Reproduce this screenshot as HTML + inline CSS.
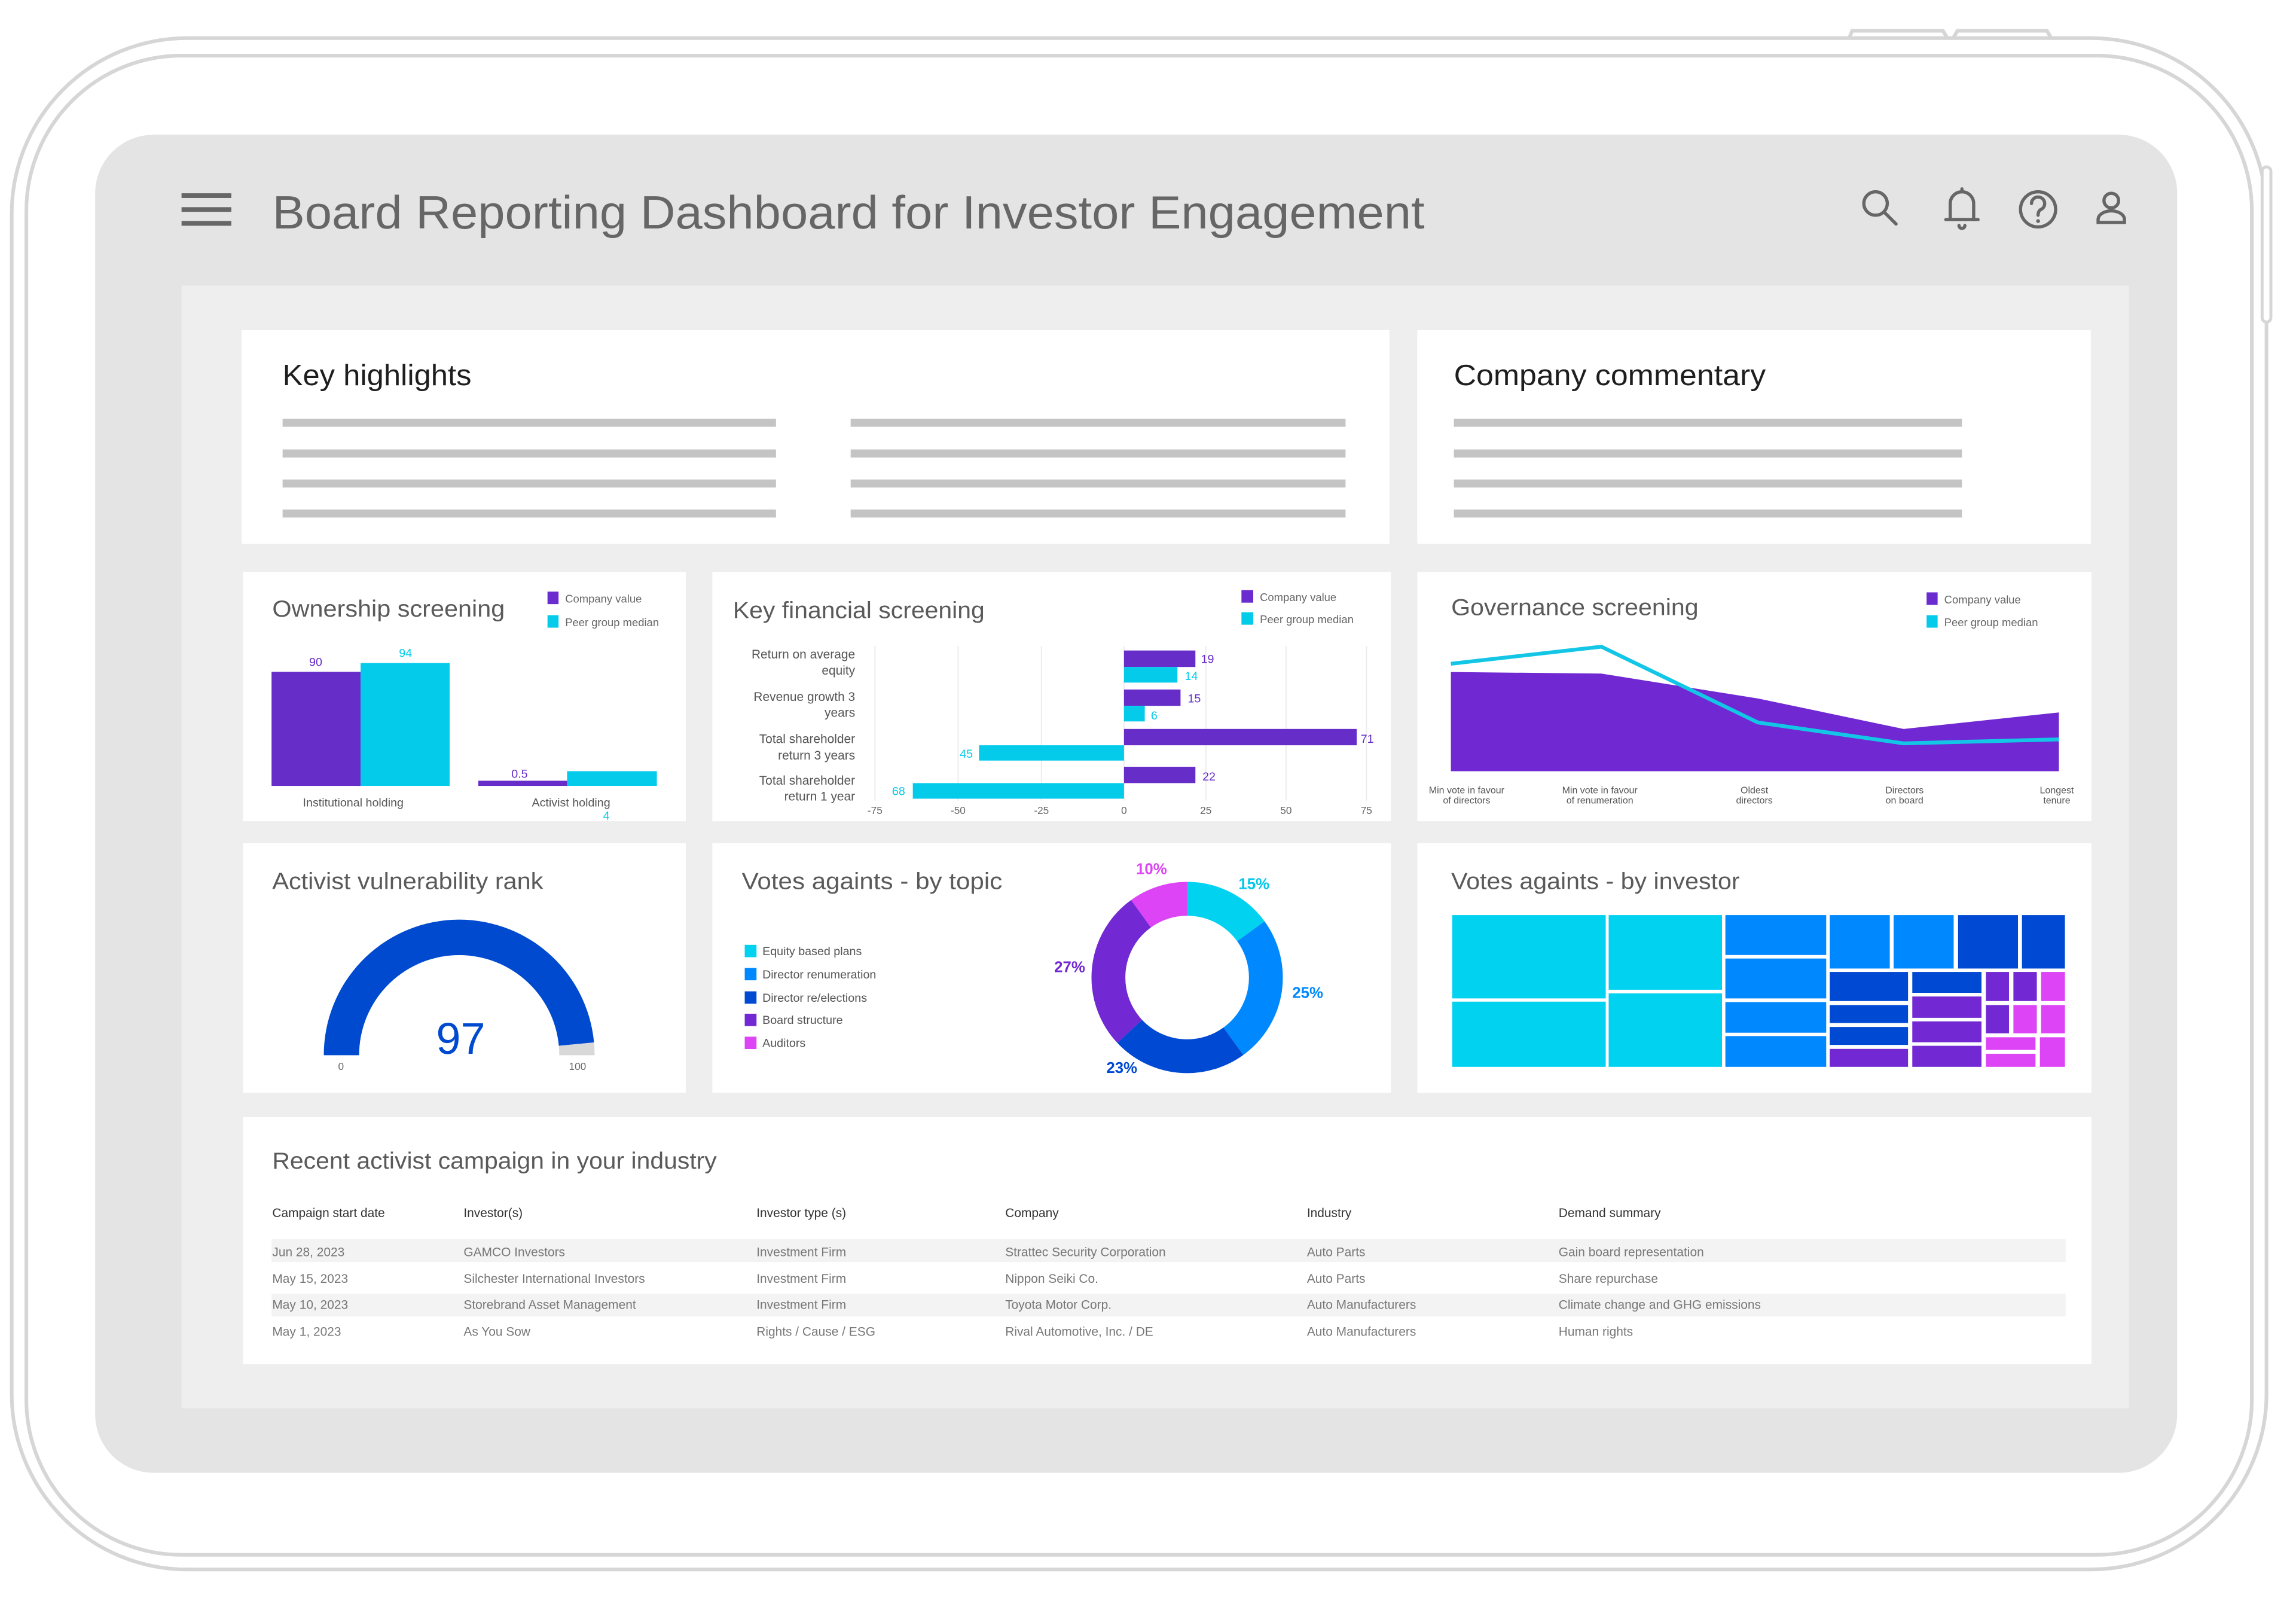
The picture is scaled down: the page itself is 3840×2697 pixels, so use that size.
<!DOCTYPE html>
<html><head><meta charset="utf-8"><style>
html,body{margin:0;padding:0;background:#fff;}
svg{display:block;}
text{font-family:"Liberation Sans",sans-serif;}
</style></head><body>
<svg width="3840" height="2697" viewBox="0 0 1560 1096" preserveAspectRatio="none" xmlns="http://www.w3.org/2000/svg">
<rect width="1560" height="1096" fill="#fff"/>
<g transform="scale(0.9948)">
<!-- device frame -->
<rect x="8" y="26" width="1540" height="1046" rx="120" fill="none" stroke="#d6d6d6" stroke-width="2.5"/>
<rect x="18" y="38" width="1520" height="1024" rx="106" fill="none" stroke="#d6d6d6" stroke-width="2.5"/>
<path d="M1263 26 L1265 21 L1327 21 L1330 26 M1334 26 L1337 21 L1398 21 L1401 26" fill="none" stroke="#d6d6d6" stroke-width="2.5"/>
<rect x="1545" y="114" width="6" height="106" rx="3" fill="#fff" stroke="#d6d6d6" stroke-width="2"/>
<!-- screen -->
<rect x="65" y="92" width="1422" height="914" rx="40" fill="#e4e4e4"/>
<rect x="124" y="195" width="1330" height="767" fill="#eeeeee"/>
<!-- header -->
<g fill="#666">
<rect x="124" y="132" width="34" height="3.2"/><rect x="124" y="141.5" width="34" height="3.2"/><rect x="124" y="151" width="34" height="3.2"/>
</g>
<text x="186" y="156" font-size="32" fill="#666" textLength="787" lengthAdjust="spacingAndGlyphs">Board Reporting Dashboard for Investor Engagement</text>
<g fill="none" stroke="#666" stroke-width="2.2" stroke-linecap="round">
<circle cx="1281" cy="139" r="8"/><line x1="1287" y1="145" x2="1295" y2="153"/>
<path d="M1332 150 L1332 139 A8 8 0 0 1 1348 139 L1348 150 Z M1329 150 L1351 150"/><path d="M1338 154 A2 2 0 0 0 1342 154"/><line x1="1340" y1="129" x2="1340" y2="131"/>
<circle cx="1392" cy="143" r="12"/>
<path d="M1387.5 139 A4.5 4.5 0 1 1 1393.5 143.3 Q1392 144.5 1392 147"/>
<circle cx="1442" cy="137" r="5"/><path d="M1433 152 L1433 150 A9 6 0 0 1 1451 150 L1451 152 Z"/>
</g>
<circle cx="1392" cy="151" r="1.3" fill="#666"/>
<!-- row1 cards -->
<rect x="165" y="225.5" width="784" height="146" fill="#fff"/>
<rect x="968" y="225.5" width="460" height="146" fill="#fff"/>
<text x="193" y="263" font-size="20" fill="#1e1e1e" textLength="129" lengthAdjust="spacingAndGlyphs">Key highlights</text>
<text x="993" y="263" font-size="20" fill="#1e1e1e" textLength="213" lengthAdjust="spacingAndGlyphs">Company commentary</text>
<g fill="#c4c4c4">
<rect x="193" y="286" width="337" height="5.5"/><rect x="193" y="307" width="337" height="5.5"/><rect x="193" y="327.5" width="337" height="5.5"/><rect x="193" y="348" width="337" height="5.5"/>
<rect x="581" y="286" width="338" height="5.5"/><rect x="581" y="307" width="338" height="5.5"/><rect x="581" y="327.5" width="338" height="5.5"/><rect x="581" y="348" width="338" height="5.5"/>
<rect x="993" y="286" width="347" height="5.5"/><rect x="993" y="307" width="347" height="5.5"/><rect x="993" y="327.5" width="347" height="5.5"/><rect x="993" y="348" width="347" height="5.5"/>
</g>
</g>

<!-- cards -->
<g fill="#fff">
<rect x="165" y="388.5" width="301" height="169.5"/>
<rect x="484" y="388.5" width="461" height="169.5"/>
<rect x="963" y="388.5" width="458" height="169.5"/>
<rect x="165" y="573" width="301" height="169.5"/>
<rect x="484" y="573" width="461" height="169.5"/>
<rect x="963" y="573" width="458" height="169.5"/>
<rect x="165" y="759" width="1256" height="168"/>
</g>

<!-- ownership -->
<text x="185" y="419" font-size="16" fill="#5a5a5a" textLength="158" lengthAdjust="spacingAndGlyphs">Ownership screening</text>
<rect x="372" y="402" width="7.5" height="8.5" fill="#6a2bcf"/><rect x="372" y="418" width="7.5" height="8.5" fill="#05cbeb"/>
<text x="384" y="409.5" font-size="7.5" fill="#666">Company value</text><text x="384" y="425.5" font-size="7.5" fill="#666">Peer group median</text>
<rect x="184.5" y="456.5" width="60.5" height="77.5" fill="#662dc9"/>
<rect x="245" y="450.5" width="60.5" height="83.5" fill="#05cbeb"/>
<rect x="325" y="530.5" width="60.3" height="3.5" fill="#662dc9"/>
<rect x="385.3" y="524" width="61" height="10" fill="#05cbeb"/>
<g font-size="8" text-anchor="middle">
<text x="214.5" y="452.5" fill="#662dc9">90</text><text x="275.5" y="446.5" fill="#05cbeb">94</text>
<text x="353" y="528.5" fill="#662dc9">0.5</text><text x="412" y="557" fill="#05cbeb">4</text>
<text x="240" y="548" fill="#555">Institutional holding</text><text x="388" y="548" fill="#555">Activist holding</text>
</g>

<!-- key financial -->
<text x="498" y="420" font-size="16" fill="#5a5a5a" textLength="171" lengthAdjust="spacingAndGlyphs">Key financial screening</text>
<rect x="843.5" y="401" width="8" height="8.5" fill="#6a2bcf"/><rect x="843.5" y="416" width="8" height="8.5" fill="#05cbeb"/>
<text x="856" y="408.5" font-size="7.5" fill="#666">Company value</text><text x="856" y="423.5" font-size="7.5" fill="#666">Peer group median</text>
<g stroke="#ececec" stroke-width="0.8">
<line x1="594.5" y1="439" x2="594.5" y2="544"/><line x1="651" y1="439" x2="651" y2="544"/><line x1="707.6" y1="439" x2="707.6" y2="544"/><line x1="763.7" y1="439" x2="763.7" y2="544"/><line x1="819.3" y1="439" x2="819.3" y2="544"/><line x1="873.8" y1="439" x2="873.8" y2="544"/><line x1="928.4" y1="439" x2="928.4" y2="544"/>
</g>
<g fill="#662dc9">
<rect x="763.7" y="442" width="48.5" height="11.2"/><rect x="763.7" y="468.5" width="38.4" height="11.1"/><rect x="763.7" y="495.3" width="158.1" height="11.1"/><rect x="763.7" y="521" width="48.5" height="11.1"/>
</g>
<g fill="#05cbeb">
<rect x="763.7" y="453.2" width="36.3" height="10.6"/><rect x="763.7" y="479.6" width="14.1" height="10.6"/><rect x="665.2" y="506.4" width="98.5" height="10.4"/><rect x="620.2" y="532.1" width="143.5" height="10.6"/>
</g>
<g font-size="8">
<text x="816" y="450.5" fill="#662dc9">19</text><text x="805" y="462" fill="#05cbeb">14</text>
<text x="807" y="477.2" fill="#662dc9">15</text><text x="782" y="488.8" fill="#05cbeb">6</text>
<text x="924.5" y="504.7" fill="#662dc9">71</text><text x="661" y="514.8" fill="#05cbeb" text-anchor="end">45</text>
<text x="817" y="530.4" fill="#662dc9">22</text><text x="615" y="540.3" fill="#05cbeb" text-anchor="end">68</text>
</g>
<g font-size="8.5" fill="#555" text-anchor="end">
<text x="581" y="447.5">Return on average</text><text x="581" y="458.3">equity</text>
<text x="581" y="476.3">Revenue growth 3</text><text x="581" y="487">years</text>
<text x="581" y="505">Total shareholder</text><text x="581" y="516">return 3 years</text>
<text x="581" y="533.2">Total shareholder</text><text x="581" y="544">return 1 year</text>
</g>
<g font-size="7" fill="#666" text-anchor="middle">
<text x="594.5" y="553">-75</text><text x="651" y="553">-50</text><text x="707.6" y="553">-25</text><text x="763.7" y="553">0</text><text x="819.3" y="553">25</text><text x="873.8" y="553">50</text><text x="928.4" y="553">75</text>
</g>

<!-- governance -->
<text x="986" y="418" font-size="16" fill="#5a5a5a" textLength="168" lengthAdjust="spacingAndGlyphs">Governance screening</text>
<rect x="1309" y="402.5" width="7.5" height="8.5" fill="#6a2bcf"/><rect x="1309" y="418" width="7.5" height="8.5" fill="#05cbeb"/>
<text x="1321" y="410" font-size="7.5" fill="#666">Company value</text><text x="1321" y="425.5" font-size="7.5" fill="#666">Peer group median</text>
<polygon points="985.8,524 985.8,456.6 1088,457.7 1194.4,474.6 1293.4,495.3 1398.9,484.1 1398.9,524" fill="#7028d2"/>
<polyline points="985.8,451 1088,439.4 1194.4,490.9 1293.4,505.1 1398.9,502.4" fill="none" stroke="#14c6e6" stroke-width="2.6" stroke-linejoin="round"/>
<g font-size="6.5" fill="#555" text-anchor="middle">
<text x="996.5" y="539">Min vote in favour</text><text x="996.5" y="546">of directors</text>
<text x="1087" y="539">Min vote in favour</text><text x="1087" y="546">of renumeration</text>
<text x="1192" y="539">Oldest</text><text x="1192" y="546">directors</text>
<text x="1294" y="539">Directors</text><text x="1294" y="546">on board</text>
<text x="1397.5" y="539">Longest</text><text x="1397.5" y="546">tenure</text>
</g>

<!-- gauge -->
<text x="185" y="604" font-size="16" fill="#5a5a5a" textLength="184" lengthAdjust="spacingAndGlyphs">Activist vulnerability rank</text>
<path d="M220 717 A92 92 0 0 1 403.6 708.3 L379.7 710.6 A68 68 0 0 0 244 717 Z" fill="#004ad0"/>
<path d="M403.6 708.3 A92 92 0 0 1 404 717 L380 717 A68 68 0 0 0 379.7 710.6 Z" fill="#d8d8d8"/>
<text x="313" y="716" font-size="30" fill="#004ad0" text-anchor="middle">97</text>
<text x="231.7" y="727" font-size="7" fill="#666" text-anchor="middle">0</text>
<text x="392.4" y="727" font-size="7" fill="#666" text-anchor="middle">100</text>

<!-- donut -->
<text x="504" y="604" font-size="16" fill="#5a5a5a" textLength="177" lengthAdjust="spacingAndGlyphs">Votes againts - by topic</text>
<g>
<rect x="506" y="642" width="8" height="8.4" fill="#00d2f0"/><rect x="506" y="657.7" width="8" height="8.4" fill="#0088ff"/><rect x="506" y="673.6" width="8" height="8.4" fill="#004ad3"/><rect x="506" y="688.8" width="8" height="8.4" fill="#7228d2"/><rect x="506" y="704.4" width="8" height="8.4" fill="#dd44f6"/>
</g>
<g font-size="8" fill="#555">
<text x="518" y="649">Equity based plans</text><text x="518" y="664.8">Director renumeration</text><text x="518" y="680.6">Director re/elections</text><text x="518" y="695.8">Board structure</text><text x="518" y="711.4">Auditors</text>
</g>
<g transform="rotate(-90 806.6 664.2)" fill="none" stroke-width="23">
<circle cx="806.6" cy="664.2" r="53.5" stroke="#00d2f0" stroke-dasharray="50.42 336.15" stroke-dashoffset="0"/>
<circle cx="806.6" cy="664.2" r="53.5" stroke="#0088ff" stroke-dasharray="84.04 336.15" stroke-dashoffset="-50.42"/>
<circle cx="806.6" cy="664.2" r="53.5" stroke="#004ad3" stroke-dasharray="77.31 336.15" stroke-dashoffset="-134.46"/>
<circle cx="806.6" cy="664.2" r="53.5" stroke="#7228d2" stroke-dasharray="90.76 336.15" stroke-dashoffset="-211.77"/>
<circle cx="806.6" cy="664.2" r="53.5" stroke="#dd44f6" stroke-dasharray="33.62 336.15" stroke-dashoffset="-302.53"/>
</g>
<g font-size="10.5" font-weight="bold" text-anchor="middle">
<text x="782.4" y="594" fill="#dd44f6">10%</text><text x="852" y="604" fill="#00c8ea">15%</text><text x="888.5" y="678" fill="#0088ff">25%</text><text x="762.2" y="729" fill="#004ad3">23%</text><text x="726.8" y="660.5" fill="#7228d2">27%</text>
</g>

<!-- treemap -->
<text x="986" y="604" font-size="16" fill="#5a5a5a" textLength="196" lengthAdjust="spacingAndGlyphs">Votes againts - by investor</text>
<g fill="#00d2f0">
<rect x="986.7" y="621.8" width="104.3" height="56.6"/><rect x="986.7" y="680.6" width="104.3" height="44.3"/>
<rect x="1093" y="621.8" width="77" height="50.7"/><rect x="1093" y="675" width="77" height="49.9"/>
</g>
<g fill="#0088ff">
<rect x="1172.3" y="621.8" width="68.5" height="27.1"/><rect x="1172.3" y="651.3" width="68.5" height="27.1"/><rect x="1172.3" y="680.9" width="68.5" height="20.8"/><rect x="1172.3" y="704" width="68.5" height="20.9"/>
<rect x="1243.2" y="621.8" width="40.8" height="36.3"/><rect x="1286.6" y="621.8" width="40.8" height="36.3"/>
</g>
<g fill="#004ad3">
<rect x="1330.4" y="621.8" width="40.7" height="36.3"/><rect x="1373.8" y="621.8" width="29.2" height="36.3"/>
<rect x="1243.2" y="660.4" width="53.2" height="19.8"/><rect x="1243.2" y="682.9" width="53.2" height="12.2"/><rect x="1243.2" y="697.8" width="53.2" height="12.2"/>
<rect x="1299.3" y="660.4" width="47" height="14.2"/>
</g>
<g fill="#7228d2">
<rect x="1243.2" y="712.7" width="53.2" height="12.2"/>
<rect x="1299.3" y="677.1" width="47" height="14.5"/><rect x="1299.3" y="694" width="47" height="14.2"/><rect x="1299.3" y="710.6" width="47" height="14.3"/>
<rect x="1349.3" y="660.4" width="15.7" height="19.8"/><rect x="1368" y="660.4" width="15.9" height="19.8"/>
<rect x="1349.3" y="682.9" width="15.7" height="19.2"/>
</g>
<g fill="#dd44f6">
<rect x="1386.8" y="660.4" width="16.2" height="19.8"/>
<rect x="1368" y="682.9" width="15.9" height="19.2"/><rect x="1386.8" y="682.9" width="16.2" height="19.2"/>
<rect x="1349.3" y="704.8" width="33.7" height="8.6"/><rect x="1349.3" y="716" width="33.7" height="8.9"/>
<rect x="1386" y="704.8" width="17" height="20.1"/>
</g>

<!-- table -->
<text x="185" y="794" font-size="16" fill="#5a5a5a" textLength="302" lengthAdjust="spacingAndGlyphs">Recent activist campaign in your industry</text>
<rect x="184.5" y="842" width="1219" height="15.5" fill="#f3f3f3"/>
<rect x="184.5" y="879" width="1219" height="15.5" fill="#f3f3f3"/>
<g font-size="8.5" fill="#333">
<text x="185" y="827">Campaign start date</text><text x="315" y="827">Investor(s)</text><text x="514" y="827">Investor type (s)</text><text x="683" y="827">Company</text><text x="888" y="827">Industry</text><text x="1059" y="827">Demand summary</text>
</g>
<g font-size="8.5" fill="#777">
<text x="185" y="853.5">Jun 28, 2023</text><text x="315" y="853.5">GAMCO Investors</text><text x="514" y="853.5">Investment Firm</text><text x="683" y="853.5">Strattec Security Corporation</text><text x="888" y="853.5">Auto Parts</text><text x="1059" y="853.5">Gain board representation</text>
<text x="185" y="871.7">May 15, 2023</text><text x="315" y="871.7">Silchester International Investors</text><text x="514" y="871.7">Investment Firm</text><text x="683" y="871.7">Nippon Seiki Co.</text><text x="888" y="871.7">Auto Parts</text><text x="1059" y="871.7">Share repurchase</text>
<text x="185" y="889.3">May 10, 2023</text><text x="315" y="889.3">Storebrand Asset Management</text><text x="514" y="889.3">Investment Firm</text><text x="683" y="889.3">Toyota Motor Corp.</text><text x="888" y="889.3">Auto Manufacturers</text><text x="1059" y="889.3">Climate change and GHG emissions</text>
<text x="185" y="907.6">May 1, 2023</text><text x="315" y="907.6">As You Sow</text><text x="514" y="907.6">Rights / Cause / ESG</text><text x="683" y="907.6">Rival Automotive, Inc. / DE</text><text x="888" y="907.6">Auto Manufacturers</text><text x="1059" y="907.6">Human rights</text>
</g>
</svg>
</body></html>
